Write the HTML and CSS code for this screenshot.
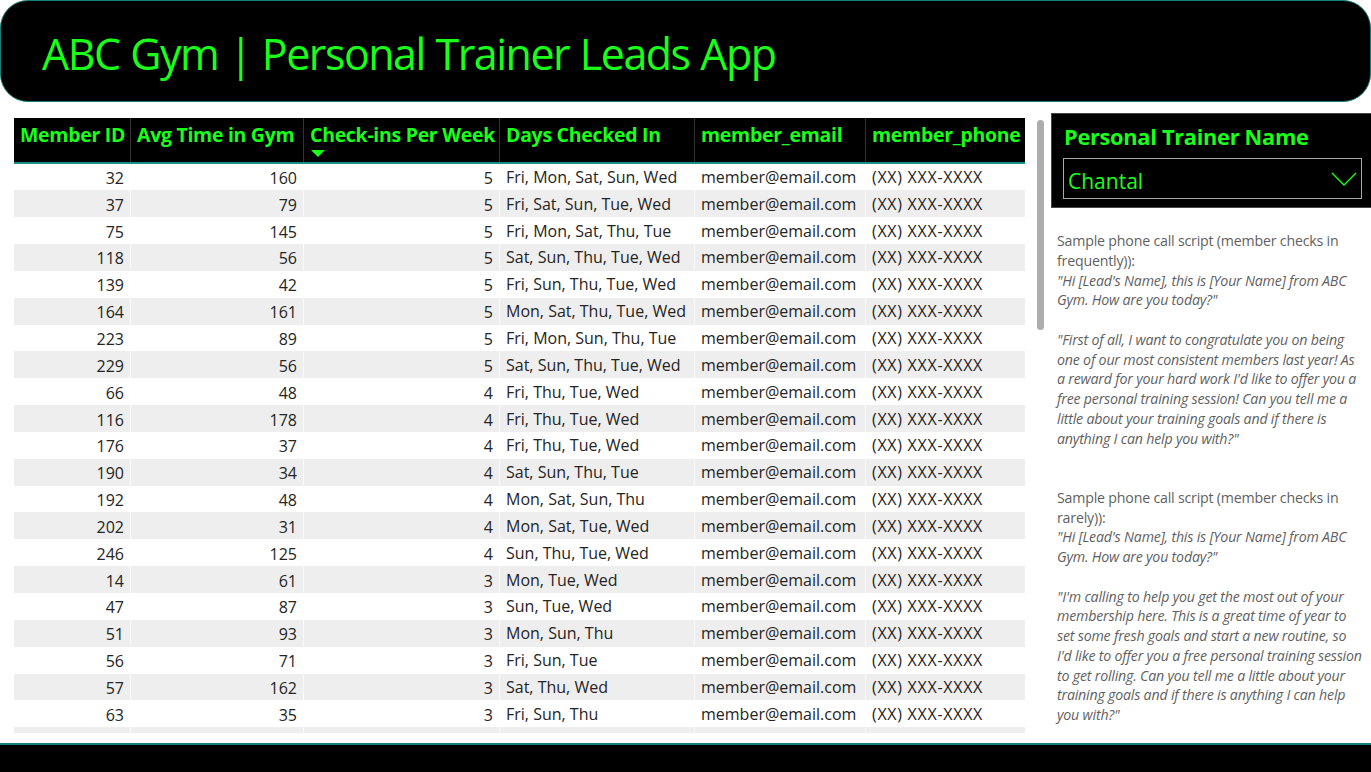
FILE: index.html
```html
<!DOCTYPE html>
<html>
<head>
<meta charset="utf-8">
<link rel="stylesheet" href="styles.css">
</head>
<body>
<div class="page">
  <header class="top">
    <h1 class="title">ABC Gym | Personal Trainer Leads App</h1>
  </header>
  <main class="main">
    <section class="tablewrap">
      <div class="table">
        <div class="row head">
          <div class="c c1">Member ID</div>
          <div class="c c2">Avg Time in Gym</div>
          <div class="c c3">Check-ins Per Week<span class="sort"></span></div>
          <div class="c c4">Days Checked In</div>
          <div class="c c5">member_email</div>
          <div class="c c6">member_phone</div>
        </div>
        <div id="body"></div>
      </div>
    </section>
    <div class="scroll"><div class="thumb"></div></div>
    <aside class="side">
      <div class="slicer">
        <div class="slicer-title">Personal Trainer Name</div>
        <div class="dropdown">
          <span>Chantal</span>
          <svg class="chev" width="26" height="16" viewBox="0 0 26 16"><path d="M1 2 L13 14 L25 2" fill="none" stroke="#1aff1a" stroke-width="1.4"/></svg>
        </div>
      </div>
      <div class="script">
        <p>Sample phone call script (member checks in<br>frequently)):<br><i>"Hi [Lead's Name], this is [Your Name] from ABC<br>Gym. How are you today?"</i></p>
        <p><i>"First of all, I want to congratulate you on being<br>one of our most consistent members last year! As<br>a reward for your hard work I'd like to offer you a<br>free personal training session! Can you tell me a<br>little about your training goals and if there is<br>anything I can help you with?"</i></p>
        <p class="gap2">Sample phone call script (member checks in<br>rarely)):<br><i>"Hi [Lead's Name], this is [Your Name] from ABC<br>Gym. How are you today?"</i></p>
        <p><i>"I'm calling to help you get the most out of your<br>membership here. This is a great time of year to<br>set some fresh goals and start a new routine, so<br>I'd like to offer you a free personal training session<br>to get rolling. Can you tell me a little about your<br>training goals and if there is anything I can help<br>you with?"</i></p>
      </div>
    </aside>
  </main>
  <footer class="bottom"></footer>
</div>
<script src="app.js"></script>
</body>
</html>
```
FILE: app.js
```js
const data = [
[32,160,5,"Fri, Mon, Sat, Sun, Wed"],
[37,79,5,"Fri, Sat, Sun, Tue, Wed"],
[75,145,5,"Fri, Mon, Sat, Thu, Tue"],
[118,56,5,"Sat, Sun, Thu, Tue, Wed"],
[139,42,5,"Fri, Sun, Thu, Tue, Wed"],
[164,161,5,"Mon, Sat, Thu, Tue, Wed"],
[223,89,5,"Fri, Mon, Sun, Thu, Tue"],
[229,56,5,"Sat, Sun, Thu, Tue, Wed"],
[66,48,4,"Fri, Thu, Tue, Wed"],
[116,178,4,"Fri, Thu, Tue, Wed"],
[176,37,4,"Fri, Thu, Tue, Wed"],
[190,34,4,"Sat, Sun, Thu, Tue"],
[192,48,4,"Mon, Sat, Sun, Thu"],
[202,31,4,"Mon, Sat, Tue, Wed"],
[246,125,4,"Sun, Thu, Tue, Wed"],
[14,61,3,"Mon, Tue, Wed"],
[47,87,3,"Sun, Tue, Wed"],
[51,93,3,"Mon, Sun, Thu"],
[56,71,3,"Fri, Sun, Tue"],
[57,162,3,"Sat, Thu, Wed"],
[63,35,3,"Fri, Sun, Thu"],
["","","",""]
];
const body = document.getElementById('body');
data.forEach(function(r){
  const row = document.createElement('div');
  row.className = 'row';
  const email = r[0] === "" ? "" : "member@email.com";
  const phone = r[0] === "" ? "" : "(XX) XXX-XXXX";
  row.innerHTML =
    '<div class="c c1 num">'+r[0]+'</div>'+
    '<div class="c c2 num">'+r[1]+'</div>'+
    '<div class="c c3 num">'+r[2]+'</div>'+
    '<div class="c c4">'+r[3]+'</div>'+
    '<div class="c c5">'+email+'</div>'+
    '<div class="c c6 phone">'+phone+'</div>';
  body.appendChild(row);
});
```
FILE: styles.css
```css
* { box-sizing: border-box; }
html, body { margin: 0; padding: 0; background: #fff; }
body { font-family: "Open Sans", "Noto Sans", sans-serif; width: 1371px; height: 772px; overflow: hidden; }
.page { display: flex; flex-direction: column; height: 772px; }

.top {
  height: 102px;
  background: #000;
  border: 1.5px solid #137f76;
  border-radius: 28px;
  display: flex;
  align-items: center;
  padding-left: 41px;
  flex: none;
}
.title {
  margin: 0;
  color: #1aff1a;
  font-weight: 400;
  font-size: 43px;
  letter-spacing: -1.5px;
  word-spacing: 1px;
  line-height: 1;
  padding-top: 4px;
}

.main { flex: 1; display: flex; min-height: 0; }

.tablewrap { width: 1025px; padding: 16px 0 0 14px; flex: none; }
.table { height: 615px; overflow: hidden; width: 1011px; }
.row { display: flex; height: 26.85px; align-items: center; font-size: 16px; color: #252423; }
.row:nth-child(even) { background: #eeeeee; }
.row .c { height: 100%; display: flex; align-items: center; padding: 0 6px; white-space: nowrap; border-right: 1px solid #fafafa; }
.row:nth-child(odd) .c { border-right-color: #fff; }
.c1 { width: 117px; }
.c2 { width: 173px; }
.c3 { width: 196px; }
.c4 { width: 195px; }
.c5 { width: 171px; }
.c6 { width: 159px; border-right: none !important; }
.phone { letter-spacing: 0.7px; }
.num { justify-content: flex-end; padding-top: 2px !important; }

.row.head {
  height: 45.5px;
  background: #000;
  border-bottom: 2px solid #1a8f86;
  align-items: stretch;
}
.row.head .c {
  color: #1aff1a;
  font-weight: 700;
  font-size: 19.5px;
  letter-spacing: -0.3px;
  align-items: flex-start;
  padding-top: 3px;
  border-right: 1px solid #333;
  position: relative;
}
.sort {
  position: absolute;
  left: 7px;
  top: 32px;
  width: 0; height: 0;
  border-left: 7px solid transparent;
  border-right: 7px solid transparent;
  border-top: 7px solid #1aff1a;
}

.scroll { width: 26px; flex: none; padding: 18px 0 0 12px; }
.thumb { width: 7px; height: 210px; background: #adadad; border-radius: 4px; }

.side { flex: 1; padding-top: 11px; }
.slicer { background: #000; height: 95px; padding: 9px 9px 0 11px; border: 1px solid #444; border-right: none; }
.slicer-title { color: #1aff1a; font-weight: 700; font-size: 21.8px; letter-spacing: -0.3px; line-height: 28px; margin-left: 1px; }
.dropdown {
  margin-top: 7px;
  height: 41px;
  border: 1px solid #a8a8a8;
  display: flex;
  align-items: center;
  justify-content: space-between;
  padding: 4px 4px 0 4px;
  color: #1aff1a;
  font-size: 21px;
}
.chev { margin-bottom: 4px; }

.script {
  padding: 23px 0 0 6px;
  color: #5f5f5f;
  font-size: 14.2px;
  font-weight: 400;
  line-height: 19.75px;
  white-space: nowrap;
  letter-spacing: -0.2px;
}
.script p { margin: 0 0 19.75px 0; }
.script p.gap2 { padding-top: 19.75px; }

.bottom { height: 29px; background: #000; border-top: 2px solid #137f76; flex: none; }
```
